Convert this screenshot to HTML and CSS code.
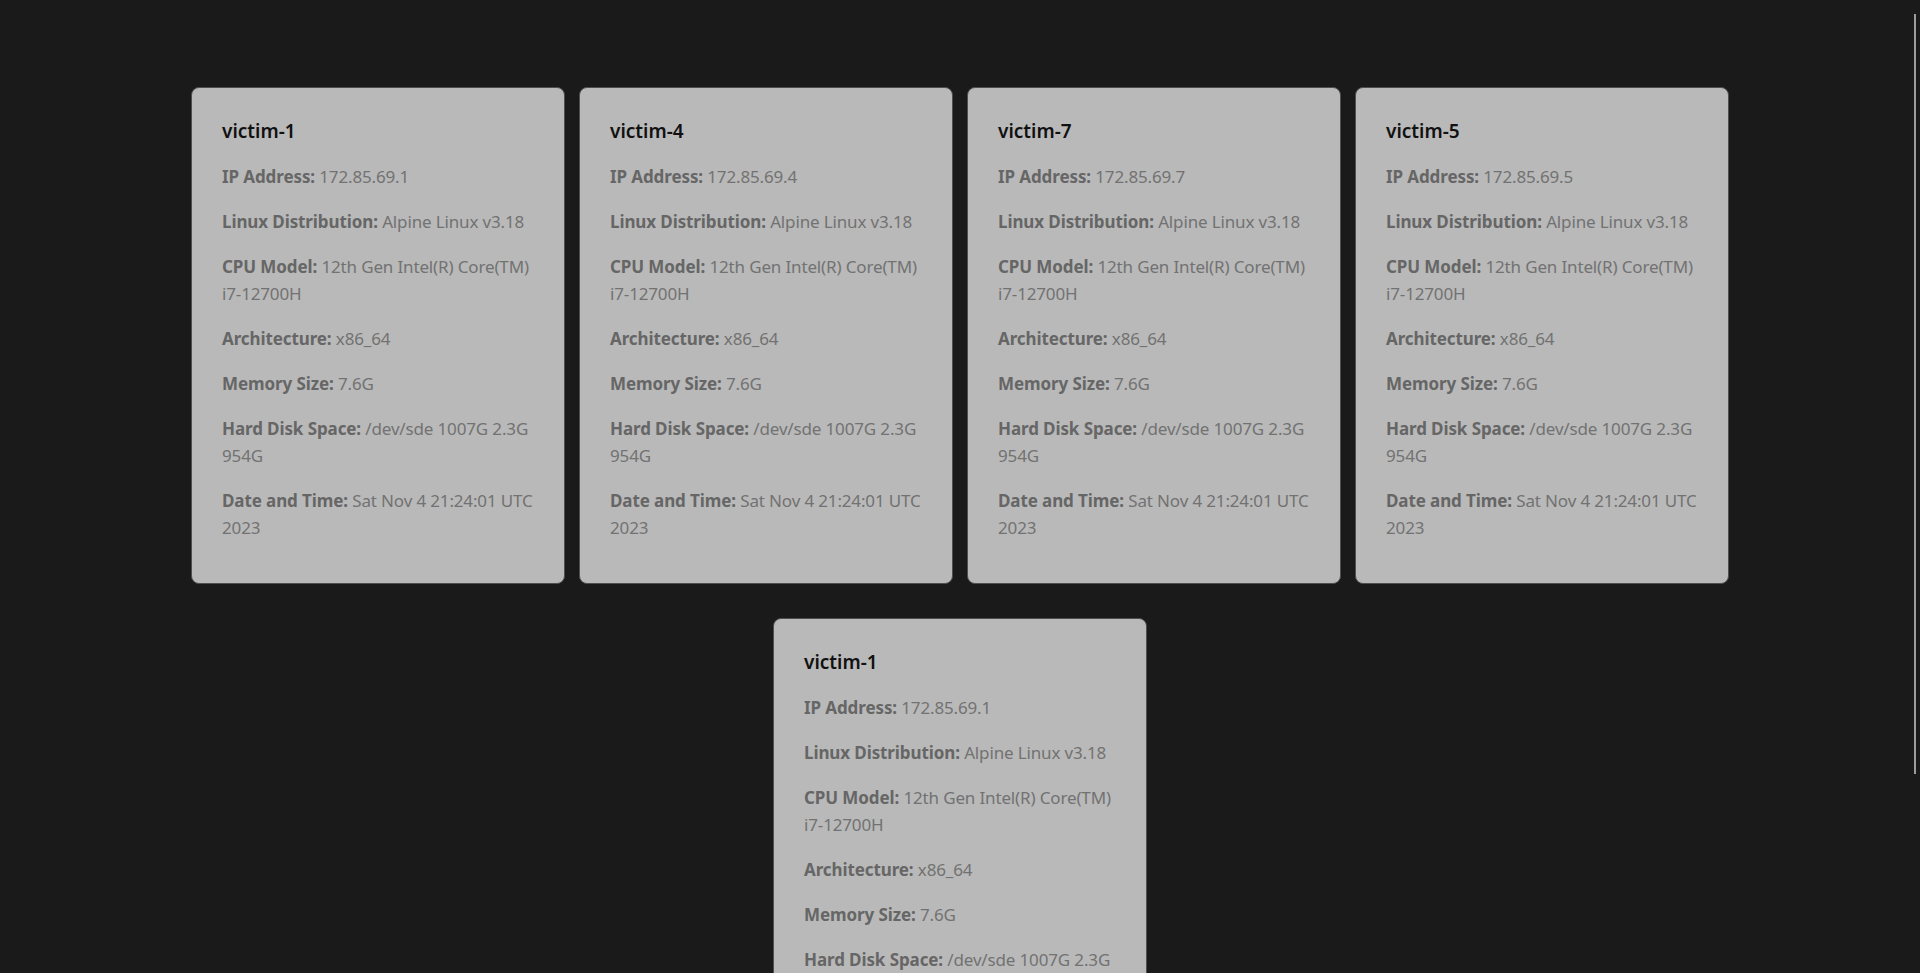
FILE: index.html
```html
<!DOCTYPE html>
<html lang="en">
<head>
<meta charset="utf-8">
<title>Victims</title>
<link rel="stylesheet" href="styles.css">
</head>
<body>
<main class="grid">
  <section class="card">
    <h3 class="card-title">victim-1</h3>
    <p><b>IP Address:</b> 172.85.69.1</p>
    <p><b>Linux Distribution:</b> Alpine Linux v3.18</p>
    <p><b>CPU Model:</b> 12th Gen Intel(R) Core(TM) i7-12700H</p>
    <p><b>Architecture:</b> x86_64</p>
    <p><b>Memory Size:</b> 7.6G</p>
    <p><b>Hard Disk Space:</b> /dev/sde 1007G 2.3G 954G</p>
    <p><b>Date and Time:</b> Sat Nov 4 21:24:01 UTC 2023</p>
  </section>
  <section class="card">
    <h3 class="card-title">victim-4</h3>
    <p><b>IP Address:</b> 172.85.69.4</p>
    <p><b>Linux Distribution:</b> Alpine Linux v3.18</p>
    <p><b>CPU Model:</b> 12th Gen Intel(R) Core(TM) i7-12700H</p>
    <p><b>Architecture:</b> x86_64</p>
    <p><b>Memory Size:</b> 7.6G</p>
    <p><b>Hard Disk Space:</b> /dev/sde 1007G 2.3G 954G</p>
    <p><b>Date and Time:</b> Sat Nov 4 21:24:01 UTC 2023</p>
  </section>
  <section class="card">
    <h3 class="card-title">victim-7</h3>
    <p><b>IP Address:</b> 172.85.69.7</p>
    <p><b>Linux Distribution:</b> Alpine Linux v3.18</p>
    <p><b>CPU Model:</b> 12th Gen Intel(R) Core(TM) i7-12700H</p>
    <p><b>Architecture:</b> x86_64</p>
    <p><b>Memory Size:</b> 7.6G</p>
    <p><b>Hard Disk Space:</b> /dev/sde 1007G 2.3G 954G</p>
    <p><b>Date and Time:</b> Sat Nov 4 21:24:01 UTC 2023</p>
  </section>
  <section class="card">
    <h3 class="card-title">victim-5</h3>
    <p><b>IP Address:</b> 172.85.69.5</p>
    <p><b>Linux Distribution:</b> Alpine Linux v3.18</p>
    <p><b>CPU Model:</b> 12th Gen Intel(R) Core(TM) i7-12700H</p>
    <p><b>Architecture:</b> x86_64</p>
    <p><b>Memory Size:</b> 7.6G</p>
    <p><b>Hard Disk Space:</b> /dev/sde 1007G 2.3G 954G</p>
    <p><b>Date and Time:</b> Sat Nov 4 21:24:01 UTC 2023</p>
  </section>
  <section class="card">
    <h3 class="card-title">victim-1</h3>
    <p><b>IP Address:</b> 172.85.69.1</p>
    <p><b>Linux Distribution:</b> Alpine Linux v3.18</p>
    <p><b>CPU Model:</b> 12th Gen Intel(R) Core(TM) i7-12700H</p>
    <p><b>Architecture:</b> x86_64</p>
    <p><b>Memory Size:</b> 7.6G</p>
    <p><b>Hard Disk Space:</b> /dev/sde 1007G 2.3G 954G</p>
    <p><b>Date and Time:</b> Sat Nov 4 21:24:01 UTC 2023</p>
  </section>
</main>
<div class="scroll-thumb"></div>
</body>
</html>
```

FILE: styles.css
```css
html {
  scrollbar-width: none;
}
html::-webkit-scrollbar {
  display: none;
}
body {
  margin: 0;
  background: #1a1a1a;
  font-family: "Noto Sans", "Open Sans", sans-serif;
}
.grid {
  max-width: 1560px;
  margin: 0 auto;
  padding: 87px 0 80px;
  display: flex;
  flex-wrap: wrap;
  justify-content: center;
  gap: 34px 14px;
}
.card {
  box-sizing: border-box;
  width: 374px;
  padding: 24px 20px 24px 30px;
  background: #b9b9b9;
  border: 1px solid #4e4e4e;
  border-radius: 8px;
}
.card-title {
  margin: 4px 0 17px;
  font-size: 19px;
  line-height: 30px;
  font-weight: 600;
  color: #111;
}
.card p {
  margin: 0 0 18px;
  font-size: 17px;
  line-height: 27px;
  color: #727272;
  letter-spacing: -0.15px;
}
.card p b {
  font-weight: 700;
  color: #666;
  letter-spacing: -0.1px;
}
.scroll-thumb {
  position: fixed;
  top: 14px;
  right: 4px;
  width: 2px;
  height: 760px;
  background: #9c9c9c;
}
```
